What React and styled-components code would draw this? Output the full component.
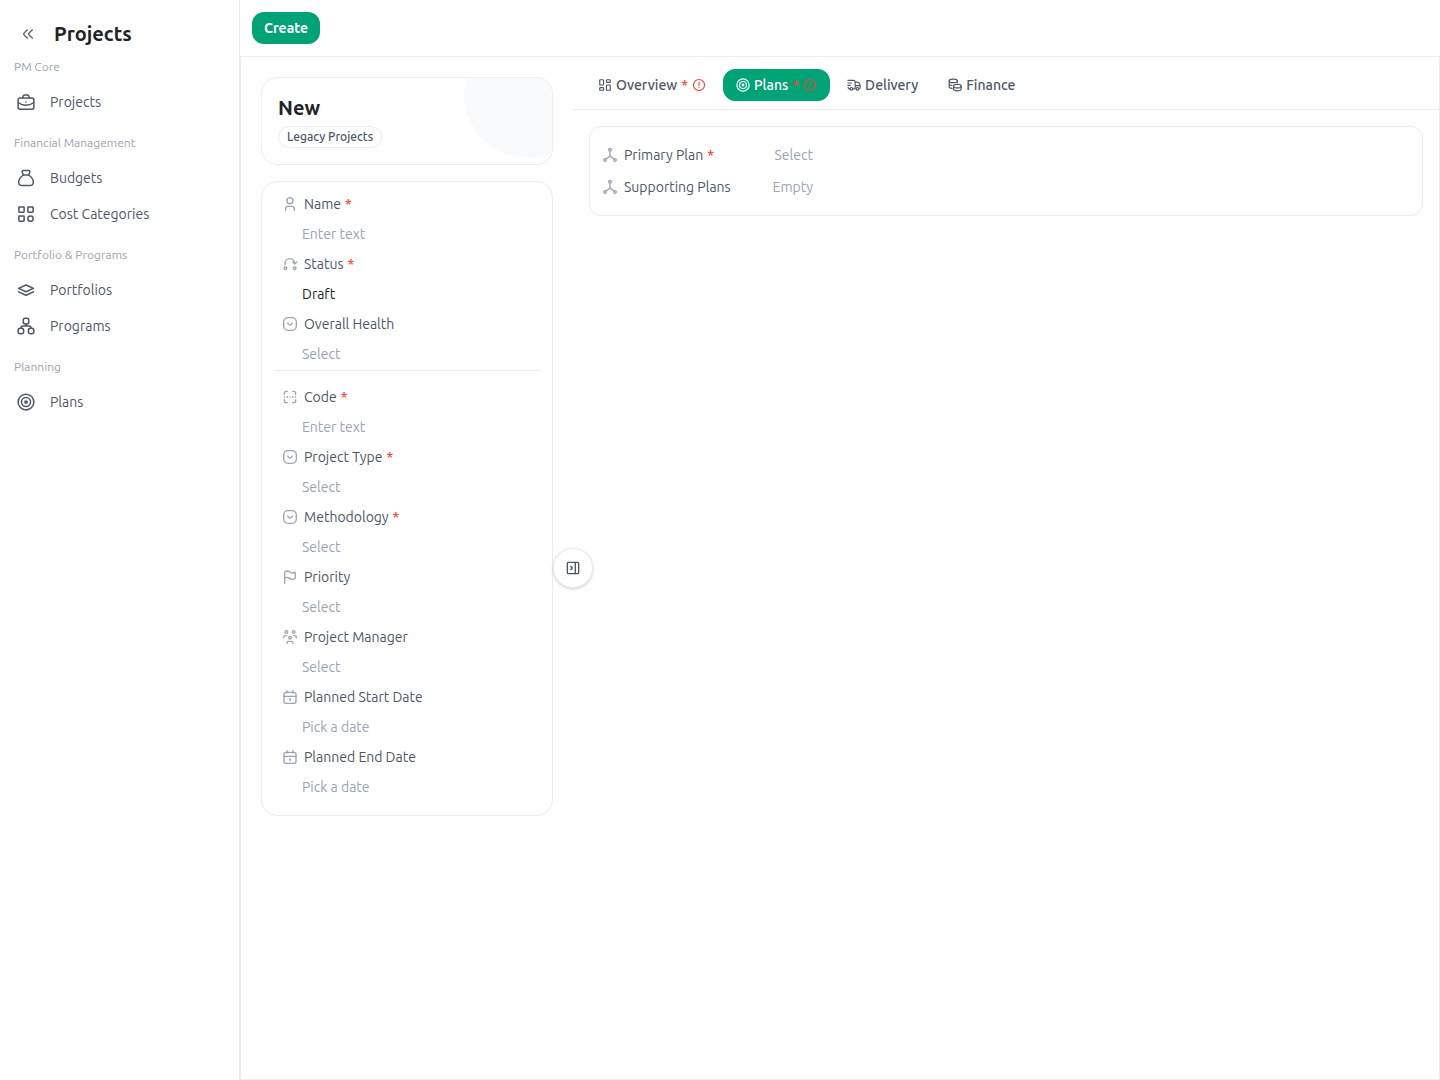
import React, { useState } from "react";
import styled, { createGlobalStyle } from "styled-components";

const GlobalStyle = createGlobalStyle`
  *, *::before, *::after {
    box-sizing: border-box;
  }
  body {
    margin: 0;
    background: #fff;
    color: #4d5768;
    font-family: Ubuntu, "Noto Sans", "Open Sans", sans-serif;
    font-size: 14px;
    line-height: 20px;
  }
  button, input, select {
    margin: 0;
    padding: 0;
    border: 0;
    background: none;
    color: inherit;
    font: inherit;
    outline: none;
  }
  button {
    cursor: pointer;
  }
`;

const Page = styled.div`
  display: flex;
  min-height: 100vh;
`;

const Sidebar = styled.aside`
  flex: 0 0 240px;
  padding: 12px 0;
  border-right: 1px solid #ececef;
`;

const SidebarHead = styled.div`
  display: flex;
  align-items: center;
  gap: 10px;
  height: 44px;
  padding-left: 12px;
`;

const IconButton = styled.button`
  display: flex;
  align-items: center;
  justify-content: center;
  width: 32px;
  height: 32px;
`;

const SidebarTitle = styled.h1`
  margin: 0;
  color: #212327;
  font-size: 20px;
  line-height: 28px;
  font-weight: 700;
`;

const NavGroup = styled.nav`
  display: flex;
  flex-direction: column;
  padding-bottom: 12px;
`;

const NavLabel = styled.div`
  height: 28px;
  padding-left: 14px;
  color: #9aa4b2;
  font-size: 12px;
  line-height: 22px;
`;

const NavLink = styled.a`
  display: flex;
  align-items: center;
  gap: 15px;
  height: 36px;
  padding-left: 17px;
  color: inherit;
  text-decoration: none;
`;

const Main = styled.main`
  flex: 1;
  min-width: 0;
  display: flex;
  flex-direction: column;
`;

const Toolbar = styled.header`
  display: flex;
  align-items: center;
  height: 56px;
  padding: 0 12px;
`;

const CreateButton = styled.button`
  height: 32px;
  padding: 0 12px;
  border-radius: 12px;
  background: #00a376;
  color: #fff;
  font-weight: 700;
`;

const Content = styled.div`
  flex: 1;
  display: flex;
  border: 1px solid #ececef;
`;

const Summary = styled.section`
  position: relative;
  flex: 0 0 332px;
  display: flex;
  flex-direction: column;
  gap: 16px;
  padding: 20px;
`;

const TitleCard = styled.div`
  position: relative;
  display: flex;
  flex-direction: column;
  align-items: flex-start;
  gap: 4px;
  padding: 16px;
  border: 1px solid #ececf1;
  border-radius: 16px;
  overflow: hidden;

  &::before {
    content: "";
    position: absolute;
    top: -48px;
    right: -40px;
    width: 128px;
    height: 128px;
    border-radius: 50%;
    background: #f9fafc;
  }
`;

const RecordTitle = styled.h2`
  margin: 0;
  color: #212327;
  font-size: 20px;
  line-height: 28px;
  font-weight: 700;
`;

const Badge = styled.span`
  padding: 0 8px;
  border: 1px solid #ececf1;
  border-radius: 11px;
  font-size: 12px;
  line-height: 20px;
  font-weight: 500;
`;

const FieldsCard = styled.div`
  display: flex;
  flex-direction: column;
  gap: 2px;
  padding: 8px 12px 14px;
  border: 1px solid #ececef;
  border-radius: 16px;
`;

const Divider = styled.hr`
  width: 100%;
  margin: 0 0 10px;
  border: 0;
  border-top: 1px solid #ececef;
`;

const FieldLabel = styled.label`
  display: flex;
  align-items: center;
  gap: 6px;
  height: 28px;
  padding-left: ${(p) => (p.$flush ? 0 : 8)}px;

  svg {
    color: #9aa4b2;
  }
`;

const LabelText = styled.span`
  display: flex;
  gap: 4px;
`;

const Star = styled.span`
  color: #f04438;
  font-weight: 500;
`;

const TextBox = styled.input`
  width: 100%;
  height: 28px;
  padding-left: ${(p) => (p.$end ? 0 : 28)}px;
  text-align: ${(p) => (p.$end ? "right" : "left")};

  &::placeholder {
    color: #9aa4b2;
    opacity: 1;
  }
`;

const Picker = styled.select`
  appearance: none;
  width: 100%;
  height: 28px;
  padding-left: ${(p) => (p.$end ? 0 : 28)}px;
  text-align-last: ${(p) => (p.$end ? "right" : "left")};
  color: ${(p) => (p.$filled ? "#212327" : "#9aa4b2")};
`;

const PaneToggle = styled.button`
  position: absolute;
  top: 50%;
  right: 0;
  transform: translate(50%, -50%);
  display: flex;
  align-items: center;
  justify-content: center;
  width: 40px;
  height: 40px;
  border: 1px solid #ececef;
  border-radius: 50%;
  background: #fff;
  box-shadow: 0 1px 3px rgba(16, 24, 40, 0.2);
`;

const Details = styled.section`
  flex: 1;
  min-width: 0;
`;

const Tabs = styled.div`
  display: flex;
  gap: 4px;
  padding: 12px 12px 8px;
  border-bottom: 1px solid #ececef;
`;

const Tab = styled.button`
  display: flex;
  align-items: center;
  gap: 4px;
  height: 32px;
  padding: 0 12px;
  border: 1px solid ${(p) => (p.$active ? "#00a376" : "transparent")};
  border-radius: 12px;
  font-weight: 500;
  background: ${(p) => (p.$active ? "#00a376" : "transparent")};
  color: ${(p) => (p.$active ? "#fff" : "inherit")};
`;

const Alert = styled.span`
  display: flex;
  color: #f04438;
`;

const Panel = styled.div`
  margin: 16px;
  padding: 12px;
  border: 1px solid #ececef;
  border-radius: 12px;
`;

const PanelRow = styled.div`
  display: grid;
  grid-template-columns: 140px 71px;
  align-items: center;
  height: 32px;
`;

const icons = {
  collapse: (
    <path d="M11 18s-5.500-4.400-5.500-6S11 6 11 6M18.500 18s-5.500-4.400-5.500-6 5.500-6 5.500-6" />
  ),
  briefcase: (
    <>
      <rect x="1.500" y="6.500" width="21" height="15" rx="2.500" />
      <path d="M7.500 6.500l.6-2.200C8.400 3.200 9 2.500 10 2.500h4c1 0 1.600.7 1.900 1.800l.6 2.200M2 13c3 2.300 6.500 3.300 10 3.300s7-1 10-3.300M12 12v.1" />
    </>
  ),
  bag: (
    <>
      <path d="M8.500 8C5 10.500 2.200 14 2.200 17.500c0 3 1.800 4.500 5 4.500h9.600c3.200 0 5-1.500 5-4.500 0-3.500-2.800-7-6.300-9.500z" />
      <path d="M8.500 8L7 4.300c-.5-1.300.2-2.300 1.500-2.300h7c1.300 0 2 1 1.500 2.300L15.500 8" />
    </>
  ),
  categories: (
    <>
      <rect x="2.500" y="2.500" width="7" height="7" rx=".8" />
      <rect x="14.500" y="2.500" width="7" height="7" rx=".8" />
      <rect x="2.500" y="14.500" width="7" height="7" rx=".8" />
      <rect x="14.500" y="14.500" width="7" height="7" rx="3.300" />
    </>
  ),
  layers: (
    <>
      <path d="M12 5.300L22 9.800 12 14.300 2 9.800z" />
      <path d="M2 14.500L12 19 22 14.500" />
    </>
  ),
  hierarchy: (
    <>
      <rect x="8.300" y="1.800" width="7.400" height="7.400" rx="2.500" />
      <rect x="1.500" y="15" width="7.400" height="7.400" rx="3" />
      <rect x="15.100" y="15" width="7.400" height="7.400" rx="3" />
      <path d="M12 9.200v2.800M5.200 15c0-2 1-3 3-3h7.600c2 0 3 1 3 3" />
    </>
  ),
  target: (
    <>
      <circle cx="12" cy="12" r="10.500" />
      <circle cx="12" cy="12" r="6" />
      <circle cx="12" cy="12" r="1.500" />
    </>
  ),
  user: (
    <>
      <circle cx="12" cy="7" r="4.500" />
      <path d="M5.500 21.500V19c0-2.300 1.300-3.500 3.500-3.500h6c2.200 0 3.500 1.200 3.500 3.500v2.500" />
    </>
  ),
  status: (
    <>
      <circle cx="5" cy="18.500" r="2" />
      <circle cx="19" cy="18.500" r="2" />
      <path d="M4.500 13v-1.500c0-4 3-7.500 7.500-7.500s7 3.500 7 7.500M16 9l3 3 3.200-3" />
    </>
  ),
  select: (
    <>
      <rect x="2.500" y="2.500" width="19" height="19" rx="6.500" />
      <path d="M8.500 10.800s2.200 3 3.500 3 3.500-3 3.500-3" />
    </>
  ),
  code: (
    <>
      <path d="M3.500 8V6.500c0-2 1-3 3-3H8M16 3.500h1.500c2 0 3 1 3 3V8M20.500 16v1.500c0 2-1 3-3 3H16M8 20.500H6.500c-2 0-3-1-3-3V16" />
      <path d="M3.500 12h.5M8 11.500v1M12 12v.1M16 11.500v1M20 12h.5" />
    </>
  ),
  flag: (
    <path d="M4 21.500V6C4 4 5.500 3 7.500 3c3.700 0 4.500 3 8 3 1.600 0 2.800-.5 4.300-1.200v9.500c-1.500.8-2.700 1.300-4.300 1.300-3.500 0-4.300-3-8-3-1.500 0-2.800.5-3.500 1.500" />
  ),
  team: (
    <>
      <circle cx="6.500" cy="4.500" r="2" />
      <circle cx="17.500" cy="4.500" r="2" />
      <circle cx="12" cy="13" r="2" />
      <path d="M2.500 13.300v-.5c0-1.800 1-2.800 2.800-2.800h1M21.500 13.300v-.5c0-1.800-1-2.800-2.800-2.800h-1M7.500 21.700v-.7c0-1.700 1.200-2.500 2.700-2.500h3.600c1.500 0 2.700.8 2.700 2.500v.7" />
    </>
  ),
  calendar: (
    <>
      <rect x="3" y="5" width="18" height="16.500" rx="3" />
      <path d="M7.500 2.500V6M16.500 2.500V6M3 11h18M11.500 15h.8v2.700" />
    </>
  ),
  nodes: (
    <>
      <circle cx="12" cy="4.200" r="2" />
      <circle cx="4.500" cy="19.500" r="2" />
      <circle cx="19.500" cy="19.500" r="2" />
      <path d="M12 6.500v7M12 13.500L6.200 18M12 13.500l5.800 4.500" />
    </>
  ),
  panel: (
    <>
      <rect x="3.500" y="3.500" width="17" height="17" rx="1.500" />
      <path d="M15.500 3.500v17M8.500 9.500L11 12l-2.500 2.500" />
    </>
  ),
  dashboard: (
    <>
      <rect x="3" y="3" width="6.500" height="9" rx="1" />
      <rect x="14.500" y="3" width="6.500" height="4.500" rx="1" />
      <rect x="3" y="16.500" width="6.500" height="4.500" rx="1" />
      <rect x="14.500" y="12" width="6.500" height="9" rx="1" />
    </>
  ),
  truck: (
    <>
      <circle cx="7.500" cy="18.500" r="2.200" />
      <circle cx="18" cy="18.500" r="2.200" />
      <path d="M1.500 4H11c2 0 3 1 3 3v11.500H9.700M14 7h3.500c2.200 0 3.300 1 4 3l1 3v3.500c0 1.400-.6 2-2.300 2M14 13h8.500M1.500 8.500h6M1.500 12.500h4M2 16v.5c0 1.300.7 2 2 2h1.300" />
    </>
  ),
  coins: (
    <>
      <ellipse cx="9" cy="5" rx="7" ry="3" />
      <path d="M2 5v5c0 1.400 2 2.500 5 2.900M16 5v3M2 10v5c0 1.400 2 2.500 5 2.900" />
      <ellipse cx="16" cy="14" rx="6.500" ry="3" />
      <path d="M9.500 14v5c0 1.700 2.900 3 6.500 3s6.500-1.300 6.500-3v-5" />
    </>
  ),
  alert: (
    <>
      <circle cx="12" cy="12" r="9.500" />
      <path d="M12 7.500v5M12 16v.1" />
    </>
  ),
};

const Icon = ({ name, size = 16 }) => (
  <svg
    width={size}
    height={size}
    viewBox="0 0 24 24"
    fill="none"
    stroke="currentColor"
    strokeWidth="2"
    strokeLinecap="round"
    strokeLinejoin="round"
    aria-hidden="true"
  >
    {icons[name]}
  </svg>
);

const navGroups = [
  { label: "PM Core", items: [{ text: "Projects", icon: "briefcase" }] },
  {
    label: "Financial Management",
    items: [
      { text: "Budgets", icon: "bag" },
      { text: "Cost Categories", icon: "categories" },
    ],
  },
  {
    label: "Portfolio & Programs",
    items: [
      { text: "Portfolios", icon: "layers" },
      { text: "Programs", icon: "hierarchy" },
    ],
  },
  { label: "Planning", items: [{ text: "Plans", icon: "target" }] },
];

const mainFields = [
  { id: "name", label: "Name", icon: "user", required: true, hint: "Enter text" },
  { id: "status", label: "Status", icon: "status", required: true, value: "Draft", select: true },
  { id: "health", label: "Overall Health", icon: "select", hint: "Select", select: true },
];

const moreFields = [
  { id: "code", label: "Code", icon: "code", required: true, hint: "Enter text" },
  { id: "type", label: "Project Type", icon: "select", required: true, hint: "Select", select: true },
  { id: "methodology", label: "Methodology", icon: "select", required: true, hint: "Select", select: true },
  { id: "priority", label: "Priority", icon: "flag", hint: "Select", select: true },
  { id: "manager", label: "Project Manager", icon: "team", hint: "Select", select: true },
  { id: "start", label: "Planned Start Date", icon: "calendar", hint: "Pick a date" },
  { id: "end", label: "Planned End Date", icon: "calendar", hint: "Pick a date" },
];

const planFields = [
  { id: "primary", label: "Primary Plan", icon: "nodes", required: true, hint: "Select", select: true },
  { id: "supporting", label: "Supporting Plans", icon: "nodes", hint: "Empty" },
];

const tabs = [
  { text: "Overview", icon: "dashboard", required: true },
  { text: "Plans", icon: "target", required: true },
  { text: "Delivery", icon: "truck" },
  { text: "Finance", icon: "coins" },
];

const Field = ({ field, end }) => (
  <>
    <FieldLabel htmlFor={field.id} $flush={end}>
      <Icon name={field.icon} />
      <LabelText>
        {field.label}
        {field.required && <Star>*</Star>}
      </LabelText>
    </FieldLabel>
    {field.select ? (
      <Picker id={field.id} $filled={Boolean(field.value)} $end={end}>
        <option>{field.value || field.hint}</option>
      </Picker>
    ) : (
      <TextBox id={field.id} type="text" placeholder={field.hint} $end={end} />
    )}
  </>
);

const App = () => {
  const [activeTab, setActiveTab] = useState("Plans");

  return (
    <Page>
      <GlobalStyle />
      <Sidebar>
        <SidebarHead>
          <IconButton aria-label="Collapse menu">
            <Icon name="collapse" />
          </IconButton>
          <SidebarTitle>Projects</SidebarTitle>
        </SidebarHead>
        {navGroups.map((group) => (
          <NavGroup key={group.label} aria-label={group.label}>
            <NavLabel>{group.label}</NavLabel>
            {group.items.map((item) => (
              <NavLink key={item.text} href="#">
                <Icon name={item.icon} size={18} />
                {item.text}
              </NavLink>
            ))}
          </NavGroup>
        ))}
      </Sidebar>
      <Main>
        <Toolbar>
          <CreateButton>Create</CreateButton>
        </Toolbar>
        <Content>
          <Summary>
            <TitleCard>
              <RecordTitle>New</RecordTitle>
              <Badge>Legacy Projects</Badge>
            </TitleCard>
            <FieldsCard>
              {mainFields.map((field) => (
                <Field key={field.id} field={field} />
              ))}
              <Divider />
              {moreFields.map((field) => (
                <Field key={field.id} field={field} />
              ))}
            </FieldsCard>
            <PaneToggle aria-label="Toggle panel">
              <Icon name="panel" />
            </PaneToggle>
          </Summary>
          <Details>
            <Tabs role="tablist">
              {tabs.map((tab) => (
                <Tab
                  key={tab.text}
                  role="tab"
                  aria-selected={activeTab === tab.text}
                  $active={activeTab === tab.text}
                  onClick={() => setActiveTab(tab.text)}
                >
                  <Icon name={tab.icon} size={14} />
                  {tab.text}
                  {tab.required && (
                    <>
                      <Star>*</Star>
                      <Alert>
                        <Icon name="alert" size={14} />
                      </Alert>
                    </>
                  )}
                </Tab>
              ))}
            </Tabs>
            <Panel>
              {planFields.map((field) => (
                <PanelRow key={field.id}>
                  <Field field={field} end />
                </PanelRow>
              ))}
            </Panel>
          </Details>
        </Content>
      </Main>
    </Page>
  );
};

export default App;
